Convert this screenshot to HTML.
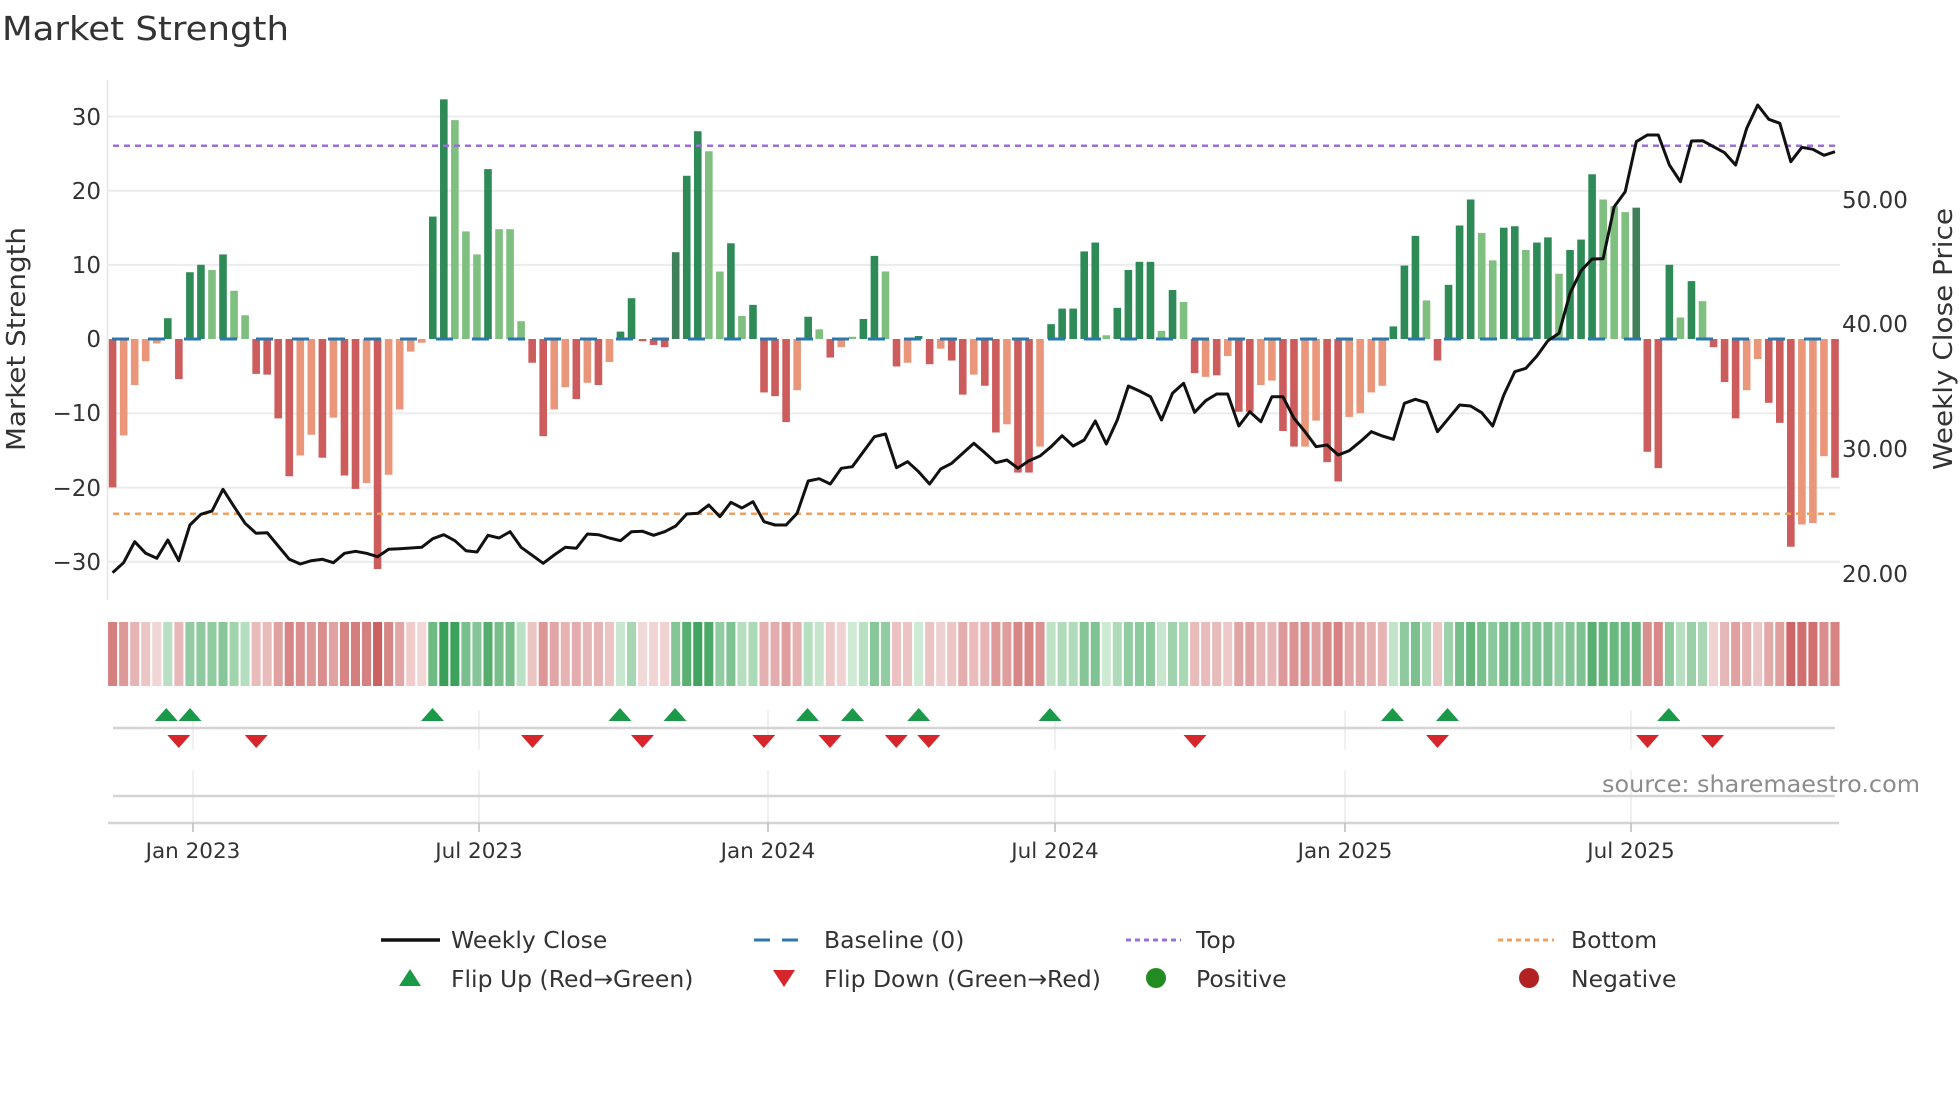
<!DOCTYPE html>
<html><head><meta charset="utf-8">
<style>
html,body{margin:0;padding:0;background:#fff;}
svg{display:block;}
text{font-family:"DejaVu Sans","Liberation Sans",sans-serif;fill:#333;}
</style></head>
<body>
<svg id="s" width="1960" height="1102" viewBox="0 0 1960 1102" xmlns="http://www.w3.org/2000/svg">
<rect width="1960" height="1102" fill="#fff"/>
<text x="2" y="40" font-size="33" textLength="287" lengthAdjust="spacingAndGlyphs">Market Strength</text>
<line x1="107.5" y1="80" x2="107.5" y2="600" stroke="#e6e6e6" stroke-width="1.5"/>
<g stroke="#ececec" stroke-width="2">
<line x1="108" y1="116.5" x2="1840" y2="116.5"/>
<line x1="108" y1="190.7" x2="1840" y2="190.7"/>
<line x1="108" y1="264.9" x2="1840" y2="264.9"/>
<line x1="108" y1="413.4" x2="1840" y2="413.4"/>
<line x1="108" y1="487.6" x2="1840" y2="487.6"/>
<line x1="108" y1="561.8" x2="1840" y2="561.8"/>
</g>
<g font-size="23" text-anchor="end">
<text x="101" y="125">30</text>
<text x="101" y="199">20</text>
<text x="101" y="273">10</text>
<text x="101" y="347">0</text>
<text x="101" y="421">−10</text>
<text x="101" y="496">−20</text>
<text x="101" y="570">−30</text>
</g>
<g font-size="23">
<text x="1842" y="208">50.00</text>
<text x="1842" y="332">40.00</text>
<text x="1842" y="457">30.00</text>
<text x="1842" y="582">20.00</text>
</g>
<text transform="translate(25,339) rotate(-90)" font-size="26" text-anchor="middle" textLength="224" lengthAdjust="spacingAndGlyphs">Market Strength</text>
<text transform="translate(1952,339) rotate(-90)" font-size="26" text-anchor="middle" textLength="262" lengthAdjust="spacingAndGlyphs">Weekly Close Price</text>
<g id="bars"></g>
<line x1="112" y1="339" x2="1839" y2="339" stroke="#2a78ad" stroke-width="3" stroke-dasharray="17 19"/>
<line x1="113" y1="145.7" x2="1840" y2="145.7" stroke="#9b6fd8" stroke-width="2.5" stroke-dasharray="6 5"/>
<line x1="113" y1="513.7" x2="1840" y2="513.7" stroke="#f0a060" stroke-width="2.5" stroke-dasharray="6 5"/>
<polyline id="price" fill="none" stroke="#111" stroke-width="3" stroke-linejoin="round"/>
<g id="heat"></g>
<g stroke="#e8eaee" stroke-width="1.5">
<line x1="193" y1="710" x2="193" y2="750"/><line x1="479" y1="710" x2="479" y2="750"/>
<line x1="768" y1="710" x2="768" y2="750"/><line x1="1055" y1="710" x2="1055" y2="750"/>
<line x1="1345" y1="710" x2="1345" y2="750"/><line x1="1631" y1="710" x2="1631" y2="750"/>
<line x1="193" y1="770" x2="193" y2="822"/><line x1="479" y1="770" x2="479" y2="822"/>
<line x1="768" y1="770" x2="768" y2="822"/><line x1="1055" y1="770" x2="1055" y2="822"/>
<line x1="1345" y1="770" x2="1345" y2="822"/><line x1="1631" y1="770" x2="1631" y2="822"/>
</g>
<line x1="113" y1="728" x2="1835" y2="728" stroke="#d4d4d4" stroke-width="2.5"/>
<line x1="113" y1="796" x2="1835" y2="796" stroke="#d4d4d4" stroke-width="2.5"/>
<line x1="108" y1="823" x2="1839" y2="823" stroke="#d4d4d4" stroke-width="2.5"/>
<g stroke="#bbb" stroke-width="1.5">
<line x1="193" y1="823" x2="193" y2="832"/><line x1="479" y1="823" x2="479" y2="832"/>
<line x1="768" y1="823" x2="768" y2="832"/><line x1="1055" y1="823" x2="1055" y2="832"/>
<line x1="1345" y1="823" x2="1345" y2="832"/><line x1="1631" y1="823" x2="1631" y2="832"/>
</g>
<g id="tri"></g>
<g font-size="21.5" text-anchor="middle">
<text x="193" y="858">Jan 2023</text>
<text x="479" y="858">Jul 2023</text>
<text x="768" y="858">Jan 2024</text>
<text x="1055" y="858">Jul 2024</text>
<text x="1345" y="858">Jan 2025</text>
<text x="1631" y="858">Jul 2025</text>
</g>
<text x="1602" y="792" font-size="23" style="fill:#8c8c8c" textLength="318" lengthAdjust="spacingAndGlyphs">source: sharemaestro.com</text>
<g font-size="23.5">
<line x1="381" y1="940" x2="440" y2="940" stroke="#111" stroke-width="3.5"/>
<text x="451" y="948">Weekly Close</text>
<line x1="754" y1="940" x2="806" y2="940" stroke="#2a78ad" stroke-width="3" stroke-dasharray="16 12"/>
<text x="824" y="948">Baseline (0)</text>
<line x1="1126" y1="940" x2="1181" y2="940" stroke="#9b6fd8" stroke-width="3" stroke-dasharray="5 4"/>
<text x="1196" y="948">Top</text>
<line x1="1498" y1="940" x2="1554" y2="940" stroke="#f0a060" stroke-width="3" stroke-dasharray="5 4"/>
<text x="1571" y="948">Bottom</text>
<polygon points="410,969 399,986 421,986" fill="#1a9a48"/>
<text x="451" y="987">Flip Up (Red→Green)</text>
<polygon points="773,970 795,970 784,987" fill="#d7262b"/>
<text x="824" y="987">Flip Down (Green→Red)</text>
<circle cx="1156" cy="978" r="10" fill="#228b22"/>
<text x="1196" y="987">Positive</text>
<circle cx="1529" cy="978" r="10" fill="#b22222"/>
<text x="1571" y="987">Negative</text>
</g>
</svg>
<script>
(function(){
var V=[-20,-13,-6.2,-3,-0.6,2.8,-5.4,9,10,9.3,11.4,6.5,3.2,-4.7,-4.8,-10.7,-18.5,-15.7,-12.9,-16,-10.6,-18.4,-20.2,-19.4,-31,-18.3,-9.5,-1.7,-0.5,16.5,32.3,29.5,14.5,11.4,22.9,14.8,14.8,2.4,-3.2,-13.1,-9.5,-6.5,-8.1,-5.9,-6.2,-3.1,1,5.5,-0.3,-0.8,-1.1,11.7,22,28,25.3,9.1,12.9,3.1,4.6,-7.2,-7.7,-11.2,-6.9,3,1.3,-2.5,-1.1,0.3,2.7,11.2,9.1,-3.7,-3.2,0.4,-3.4,-1.3,-2.9,-7.5,-4.8,-6.3,-12.6,-11.5,-18,-18,-14.5,2,4.1,4.1,11.8,13,0.5,4.2,9.3,10.4,10.4,1.1,6.6,5,-4.6,-5.1,-4.9,-2.3,-9.8,-9.8,-6.2,-5.6,-12.4,-14.5,-14.5,-11,-16.6,-19.2,-10.5,-10,-7.2,-6.3,1.7,9.9,13.9,5.2,-2.9,7.3,15.3,18.8,14.3,10.6,15,15.2,12,13,13.7,8.8,12,13.4,22.2,18.8,17.9,17.1,17.7,-15.2,-17.4,10,2.9,7.8,5.1,-1.1,-5.8,-10.7,-6.9,-2.7,-8.6,-11.3,-28,-25,-24.8,-15.8,-18.7];
var T="RSSSSDRDDLDLLRRRRSSRSRRSRSSSSDDLLLDLLLRRSSRSRSDDRRRMDDLLDLDRRRSDLRSLDDLRSDRSRRSRRSRRSDDDDDLDDDDLDLRSRSRRSSRRSSRRSSSSDDDLRDDDLLDDLDDLDDDLLLMRRDLDLRRRSSRRRSSSR";
var P=[1478,1448,1385,1420,1435,1380,1442,1335,1303,1293,1228,1280,1330,1360,1358,1398,1438,1452,1442,1438,1448,1420,1414,1420,1430,1408,1406,1404,1402,1376,1364,1382,1412,1416,1366,1374,1355,1402,1426,1450,1425,1402,1405,1362,1364,1374,1382,1355,1354,1366,1355,1338,1302,1300,
1275,1310,1267,1284,1265,1325,1335,1335,1300,1203,1196,1212,1165,1160,1115,1070,1062,1163,1145,1175,1212,1167,1150,1120,1090,1118,1148,1140,1165,1142,1128,1100,1067,1098,1080,1023,1092,1020,918,933,950,1020,940,910,997,962,942,942,1038,995,1025,
950,950,1015,1055,1100,1095,1125,1112,1085,1055,1068,1078,970,958,968,1055,1015,975,978,998,1038,945,875,865,828,782,760,640,572,537,536,380,335,185,165,165,255,305,183,182,200,218,255,145,75,118,130,245,202,208,226,215];
var C={R:"#cd5c5c",S:"#e9967a",D:"#2e8b57",L:"#7fbf7f",M:"#3f7f5a"};
var NS="http://www.w3.org/2000/svg";
function el(n,a,p){var e=document.createElementNS(NS,n);for(var k in a)e.setAttribute(k,a[k]);p.appendChild(e);return e;}
var bars=document.getElementById("bars"),heat=document.getElementById("heat");
var x0=112.6,dx=(1835-112.6)/156,w=7.6,z=339,k=7.42;
function mix(a,b,t){return "rgb("+[0,1,2].map(function(i){return Math.round(a[i]+(b[i]-a[i])*t);}).join(",")+")";}
var pts=[];
for(var i=0;i<V.length;i++){
  var x=x0+i*dx,v=V[i],h=Math.abs(v)*k;
  el("rect",{x:(x-w/2).toFixed(2),y:(v>=0?z-h:z).toFixed(2),width:w,height:Math.max(h,1).toFixed(2),fill:C[T[i]]},bars);
  var t=Math.min(Math.abs(v)/30,1);t=Math.pow(t,0.7);
  var col=v>=0?mix([214,238,218],[58,160,88],t):mix([244,222,222],[203,96,96],t);
  el("rect",{x:(x-dx/2+1).toFixed(2),y:622,width:(dx-2).toFixed(2),height:64,fill:col},heat);
  pts.push(x.toFixed(1)+","+(80+P[i]/3).toFixed(1));
}
document.getElementById("price").setAttribute("points",pts.join(" "));
var tri=document.getElementById("tri");
var ups=[133,152,346,496,540,646,682,735,840,1114,1158,1335],dn=[143,205,426,514,611,664,717,743,956,1150,1318,1370];
ups.forEach(function(d){var x=d*1.25;el("polygon",{points:x+",708 "+(x-11.5)+",721 "+(x+11.5)+",721",fill:"#1a9a48"},tri);});
dn.forEach(function(d){var x=d*1.25;el("polygon",{points:(x-11.5)+",735 "+(x+11.5)+",735 "+x+",748",fill:"#d7262b"},tri);});
})();
</script>
</body></html>
